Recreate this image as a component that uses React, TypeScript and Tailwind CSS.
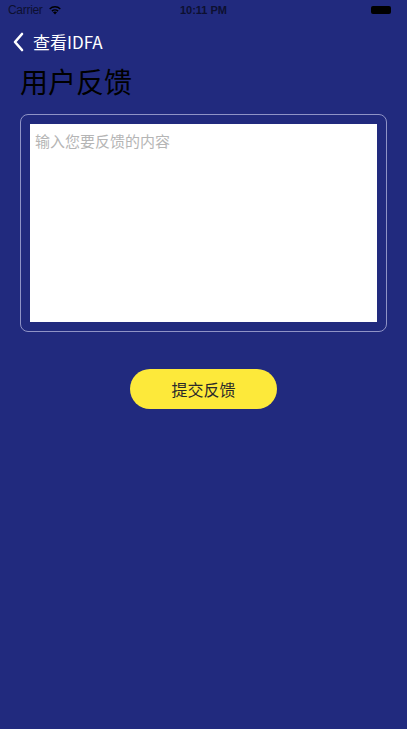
export default function App() {
    return (
        <div
            className="flex min-h-[729px] w-full flex-col bg-[#212a7e]"
            style={{ fontFamily: '"Noto Sans CJK SC", "Liberation Sans", sans-serif' }}
        >
            {/* Status bar */}
            <div className="relative flex h-5 items-center px-2 text-[12px] text-[#0d1030]">
                <span className="font-['Liberation_Sans'] tracking-tight">Carrier</span>
                <svg width="14" height="10" viewBox="0 0 14 10" className="ml-[5px]">
                    <path d="M7 9.5 L5 7.3 A3 3 0 0 1 9 7.3 Z" fill="black" />
                    <path d="M3.4 5.6 A5.2 5.2 0 0 1 10.6 5.6 L9.6 6.7 A3.8 3.8 0 0 0 4.4 6.7 Z" fill="black" />
                    <path d="M1.2 3.4 A8.2 8.2 0 0 1 12.8 3.4 L11.8 4.5 A6.7 6.7 0 0 0 2.2 4.5 Z" fill="black" />
                </svg>
                <span className="absolute left-1/2 -translate-x-1/2 font-['Liberation_Sans'] text-[11px] font-bold">
                    10:11 PM
                </span>
                <div className="ml-auto mr-2 h-[8px] w-[20px] rounded-[2px] bg-black" />
            </div>

            {/* Nav bar */}
            <div className="flex h-11 items-center pl-[12px] text-white">
                <svg width="13" height="20" viewBox="0 0 13 20" fill="none">
                    <path d="M10 2 L3 10 L10 18" stroke="white" strokeWidth="2.6" strokeLinecap="round" strokeLinejoin="round" />
                </svg>
                <span className="ml-[8px] text-[17px]">查看IDFA</span>
            </div>

            {/* Title */}
            <h1 className="ml-[20px] mt-[1px] text-[28px] leading-[32px] text-black">用户反馈</h1>

            {/* Feedback box */}
            <div className="mx-[20px] mt-[17px] h-[218px] rounded-[8px] border border-[#8f93c6] p-[9px]">
                <textarea
                    placeholder="输入您要反馈的内容"
                    className="h-full w-full resize-none bg-white px-[5px] py-[6px] text-[15px] text-black outline-none placeholder:text-[#b5b5b5]"
                />
            </div>

            {/* Submit */}
            <div className="mt-[37px] flex justify-center">
                <button className="h-[40px] w-[147px] rounded-full bg-[#fde93a] text-[16px] text-[#2a2a2a]">
                    提交反馈
                </button>
            </div>
        </div>
    )
}
